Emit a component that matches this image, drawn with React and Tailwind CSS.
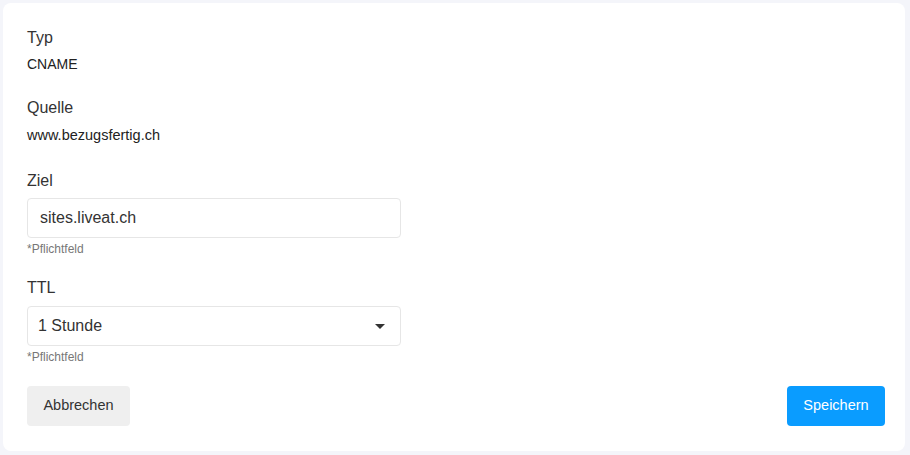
export default function App() {
  return (
    <div
      className="w-[910px] h-[455px] bg-[#f4f5fa] p-[3px] pr-[5px] pb-[4px]"
      style={{ fontFamily: '"Liberation Sans", Arial, sans-serif' }}
    >
      <div className="h-full bg-white rounded-lg pt-[23px] pl-6 pr-5 flex flex-col">
        <div className="text-[16px] leading-6 text-[#333]">Typ</div>
        <div className="mt-[4px] text-[14px] leading-5 text-[#222]">CNAME</div>

        <div className="mt-[22px] text-[16px] leading-6 text-[#333]">Quelle</div>
        <div className="mt-[5px] text-[14.5px] leading-5 text-[#222]">www.bezugsfertig.ch</div>

        <div className="mt-6 text-[16px] leading-6 text-[#333]">Ziel</div>
        <div className="mt-[5px] w-[374px] h-10 border border-[#e6e6e6] rounded flex items-center px-3 text-[16px] leading-6 text-[#333]">
          sites.liveat.ch
        </div>
        <div className="mt-[3px] text-[12px] leading-4 text-[#777]">*Pflichtfeld</div>

        <div className="mt-[19px] text-[16px] leading-6 text-[#333]">TTL</div>
        <div className="mt-[6px] w-[374px] h-10 border border-[#e6e6e6] rounded flex items-center justify-between pl-[10px] pr-[15px] text-[16px] leading-6 text-[#333]">
          <span>1 Stunde</span>
          <svg width="10" height="5" viewBox="0 0 10 5">
            <path d="M0 0 L10 0 L5 5 Z" fill="#333" />
          </svg>
        </div>
        <div className="mt-[3px] text-[12px] leading-4 text-[#777]">*Pflichtfeld</div>

        <div className="mt-[21px] flex justify-between">
          <button className="h-10 w-[103px] rounded bg-[#efefef] text-[14.5px] text-[#333]">
            Abbrechen
          </button>
          <button className="h-10 w-[98px] rounded bg-[#0a9cff] text-[14.5px] text-white">
            Speichern
          </button>
        </div>
      </div>
    </div>
  );
}
